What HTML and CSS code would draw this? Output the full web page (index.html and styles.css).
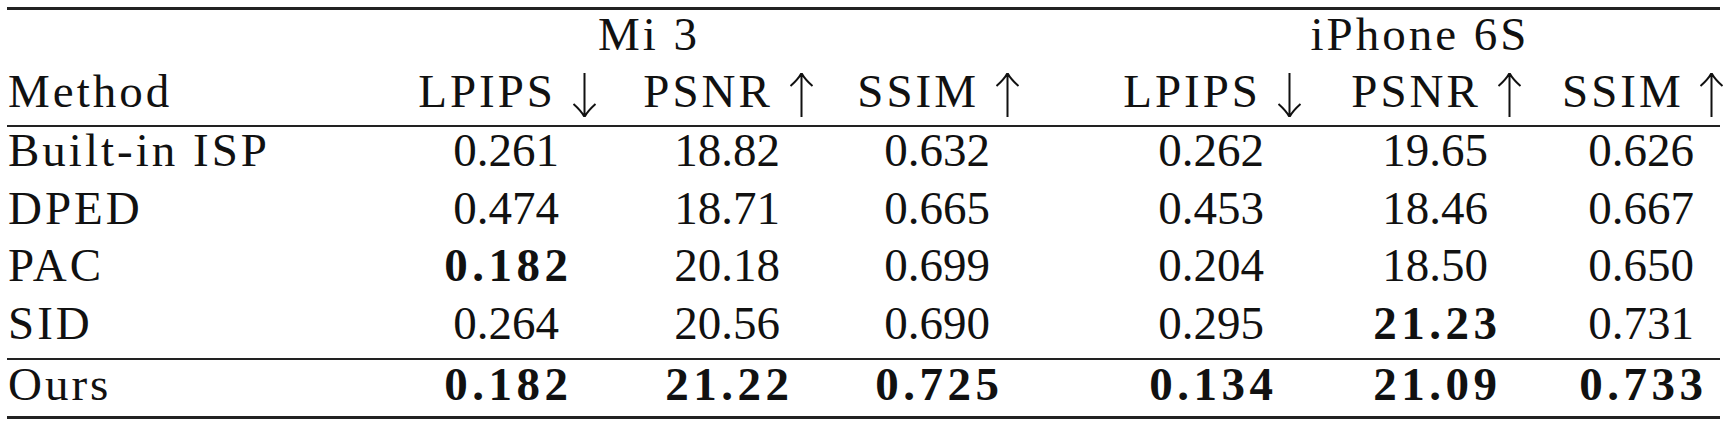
FILE: index.html
```html
<!DOCTYPE html>
<html lang="en">

<head>
   <meta charset="UTF-8">
   <meta name="viewport" content="width=device-width, initial-scale=1.0">
   <title>Results</title>
   <link rel="stylesheet" href="styles.css">
</head>

<body>
   <div class="results">
      <div class="rule heavy"></div>

      <!-- device groups -->
      <div class="row group-row">
         <span class="label group mi">Mi 3</span>
         <span class="label group iphone">iPhone 6S</span>
      </div>

      <div class="row head-row">
         <span class="label">Method</span>
         <span class="label">LPIPS <svg class="arrow" viewBox="0 0 25 44"><path d="M12.5 0 V43 M1.5 31 C6 35 10 39 12.5 44 C15 39 19 35 23.5 31"/></svg></span>
         <span class="label">PSNR <svg class="arrow" viewBox="0 0 25 44"><path d="M12.5 44 V1 M1.5 13 C6 9 10 5 12.5 0 C15 5 19 9 23.5 13"/></svg></span>
         <span class="label">SSIM <svg class="arrow" viewBox="0 0 25 44"><path d="M12.5 44 V1 M1.5 13 C6 9 10 5 12.5 0 C15 5 19 9 23.5 13"/></svg></span>
         <span class="label">LPIPS <svg class="arrow" viewBox="0 0 25 44"><path d="M12.5 0 V43 M1.5 31 C6 35 10 39 12.5 44 C15 39 19 35 23.5 31"/></svg></span>
         <span class="label">PSNR <svg class="arrow" viewBox="0 0 25 44"><path d="M12.5 44 V1 M1.5 13 C6 9 10 5 12.5 0 C15 5 19 9 23.5 13"/></svg></span>
         <span class="label">SSIM <svg class="arrow" viewBox="0 0 25 44"><path d="M12.5 44 V1 M1.5 13 C6 9 10 5 12.5 0 C15 5 19 9 23.5 13"/></svg></span>
      </div>

      <div class="rule light"></div>

      <div class="body">
         <div class="row">
            <span class="label">Built-in ISP</span>
            <span>0.261</span><span>18.82</span><span>0.632</span>
            <span>0.262</span><span>19.65</span><span>0.626</span>
         </div>
         <div class="row">
            <span class="label">DPED</span>
            <span>0.474</span><span>18.71</span><span>0.665</span>
            <span>0.453</span><span>18.46</span><span>0.667</span>
         </div>
         <div class="row">
            <span class="label">PAC</span>
            <span><b class="best">0.182</b></span><span>20.18</span><span>0.699</span>
            <span>0.204</span><span>18.50</span><span>0.650</span>
         </div>
         <div class="row">
            <span class="label">SID</span>
            <span>0.264</span><span>20.56</span><span>0.690</span>
            <span>0.295</span><span><b class="best">21.23</b></span><span>0.731</span>
         </div>
      </div>

      <div class="rule light before-total"></div>

      <div class="row total-row">
         <span class="label">Ours</span>
         <span><b class="best">0.182</b></span><span><b class="best">21.22</b></span><span><b class="best">0.725</b></span>
         <span><b class="best">0.134</b></span><span><b class="best">21.09</b></span><span><b class="best">0.733</b></span>
      </div>

      <div class="rule heavy bottom"></div>
   </div>
</body>

</html>
```

FILE: styles.css
```css
* {
   margin: 0;
   padding: 0;
   box-sizing: border-box;
}

body {
   background: #fff;
   color: #111;
   font-family: "Liberation Serif", "Times New Roman", serif;
   font-size: 47px;
   padding: 7px 0 0 7px;
}

.results {
   width: 1713px;
}

/* booktabs-like rules */
.rule {
   background: #222;
}

.rule.heavy {
   height: 3px;
}

.rule.light {
   height: 2px;
}

.rule.before-total {
   margin-top: 5.6px;
}

.rule.bottom {
   margin-top: 8px;
}

.row {
   display: grid;
   grid-template-columns: 385px 228px 214px 206px 60px 222px 226px 172px;
   text-align: center;
   white-space: nowrap;
   line-height: 57.5px;
}

.row > :first-child {
   text-align: left;
   padding-left: 1px;
}

/* skip the spacer track between the two devices */
.row > :nth-child(5) {
   grid-column-start: 6;
}

.row > :nth-child(7) {
   padding-left: 14px;
}

.label {
   letter-spacing: 3px;
}

.group-row {
   line-height: 48px;
}

.group-row .mi {
   grid-column: 2 / 5;
   text-align: center;
   padding-left: 0;
   padding-right: 134px;
}

.group-row .iphone {
   grid-column: 6 / 9;
   padding-left: 20px;
}

.head-row {
   line-height: 67px;
}

.arrow {
   width: 25px;
   height: 44px;
   vertical-align: -10px;
   margin-left: 1px;
   margin-right: -3px;
   fill: none;
   stroke: #111;
   stroke-width: 2;
}

.body {
   margin-top: -4.6px;
}

.total-row {
   line-height: 48px;
}

.best {
   font-weight: bold;
   letter-spacing: 4.5px;
   margin-right: -4.5px;
}
```
